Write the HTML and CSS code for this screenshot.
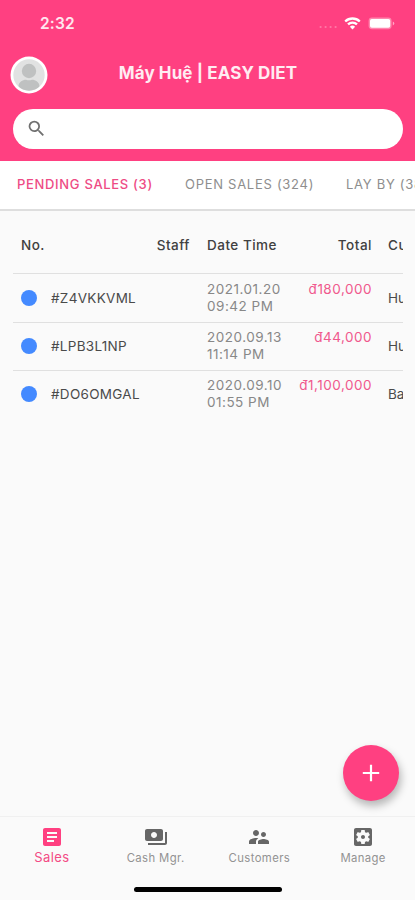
FILE: index.html
```html
<!DOCTYPE html>
<html lang="vi">
<head>
<meta charset="utf-8">
<meta name="viewport" content="width=device-width, initial-scale=1">
<title>Sales</title>
<link rel="stylesheet" href="styles.css">
</head>
<body>
<div class="app">
  <header class="header">
    <div class="status">
      <span class="clock">2:32</span>
      <div class="status-icons">
        <svg width="19" height="4" viewBox="0 0 19 4" fill="#ff78a5"><circle cx="1.6" cy="2" r="1.1"/><circle cx="6.6" cy="2" r="1.1"/><circle cx="11.6" cy="2" r="1.1"/><circle cx="16.6" cy="2" r="1.1"/></svg>
        <svg class="wifi" width="17" height="13" viewBox="0 0 17 13" fill="none" stroke="#fff" stroke-width="2.3"><path d="M1.2 4.5a10.4 10.4 0 0 1 14.6 0"/><path d="M4 7.4a6.4 6.4 0 0 1 9 0"/><path d="M8.5 12.4L5.9 9.8a3.7 3.7 0 0 1 5.2 0z" fill="#fff" stroke="none"/></svg>
        <svg class="battery" width="27" height="13" viewBox="0 0 27 13"><rect x=".6" y=".6" width="23" height="11.6" rx="3.4" fill="#ff86ae"/><rect x="2" y="2" width="20.2" height="8.8" rx="1.8" fill="#fff"/><path d="M24.8 4.6q1.5.6 1.5 1.9t-1.5 1.9z" fill="#ffa5c3"/></svg>
      </div>
    </div>
    <div class="titlebar">
      <svg class="avatar" width="38" height="38" viewBox="0 0 38 38"><defs><clipPath id="face"><circle cx="19" cy="19" r="15.7"/></clipPath></defs><circle cx="19" cy="19" r="18.5" fill="#fff"/><circle cx="19" cy="19" r="15.7" fill="#e1e2e2"/><g clip-path="url(#face)" fill="#bfc1c1"><circle cx="19" cy="15" r="7.2"/><path d="M8.5 38v-7.5c0-4.500 4-6.800 7.500-6.800q3 1.300 6 0c3.500 0 7.500 2.300 7.500 6.800V38z"/></g></svg>
      <h1 class="title">Máy Huệ | EASY DIET</h1>
    </div>
    <div class="search">
      <svg width="21" height="21" viewBox="0 0 24 24" fill="#707070"><path d="M15.500 14h-.79l-.28-.27A6.470 6.470 0 0 0 16 9.500 6.500 6.500 0 1 0 9.500 16c1.610 0 3.090-.59 4.230-1.570l.27.28v.79l5 4.990L20.490 19l-4.990-5zm-6 0C7.010 14 5 11.990 5 9.500S7.010 5 9.500 5 14 7.010 14 9.500 11.990 14 9.500 14z"/></svg>
    </div>
  </header>

  <nav class="tabs">
    <span class="tab tab-pending">PENDING SALES (3)</span>
    <span class="tab tab-open">OPEN SALES (324)</span>
    <span class="tab tab-layby">LAY BY (38)</span>
  </nav>

  <main class="content">
    <div class="table">
      <div class="row head">
        <span>No.</span><span class="right staff">Staff</span><span class="date">Date Time</span><span class="right">Total</span><span class="customer">Customer</span>
      </div>
      <div class="row first">
        <span class="number"><i class="dot"></i><span class="code">#Z4VKKVML</span></span><span></span><span class="date">2021.01.20<br>09:42 PM</span><span class="right total">đ180,000</span><span class="customer">Hu</span>
      </div>
      <div class="row">
        <span class="number"><i class="dot"></i><span class="code">#LPB3L1NP</span></span><span></span><span class="date">2020.09.13<br>11:14 PM</span><span class="right total">đ44,000</span><span class="customer">Hu</span>
      </div>
      <div class="row">
        <span class="number"><i class="dot"></i><span class="code">#DO6OMGAL</span></span><span></span><span class="date">2020.09.10<br>01:55 PM</span><span class="right total">đ1,100,000</span><span class="customer">Ban</span>
      </div>
    </div>
  </main>

  <button class="fab" aria-label="Add"><svg width="26" height="26" viewBox="0 0 26 26" fill="none" stroke="#fff" stroke-width="2.200"><path d="M13 4.800v16.400M4.800 13h16.400"/></svg></button>

  <footer class="footer">
    <nav class="bottom-nav">
      <div class="nav-item active">
        <svg width="24" height="24" viewBox="0 0 24 24"><path d="M19 3H5c-1.100 0-2 .9-2 2v14c0 1.100.9 2 2 2h14c1.100 0 2-.9 2-2V5c0-1.100-.9-2-2-2zm-5 14H7v-2h7v2zm3-4H7v-2h10v2zm0-4H7V7h10v2z"/></svg>
        <span>Sales</span>
      </div>
      <div class="nav-item">
        <svg width="24" height="24" viewBox="0 0 24 24"><path d="M19 14V6c0-1.100-.9-2-2-2H3c-1.100 0-2 .9-2 2v8c0 1.100.9 2 2 2h14c1.100 0 2-.9 2-2zm-9-1c-1.660 0-3-1.340-3-3s1.340-3 3-3 3 1.340 3 3-1.340 3-3 3zm13-6v11c0 1.100-.9 2-2 2H4v-2h17V7h2z"/></svg>
        <span>Cash Mgr.</span>
      </div>
      <div class="nav-item">
        <svg width="24" height="24" viewBox="0 0 24 24"><path d="M16.500 12c1.380 0 2.490-1.120 2.490-2.500S17.880 7 16.500 7C15.120 7 14 8.120 14 9.500s1.120 2.500 2.500 2.500zM9 11c1.660 0 2.990-1.340 2.990-3S10.660 5 9 5C7.340 5 6 6.340 6 8s1.340 3 3 3zm7.500 3c-1.830 0-5.500.92-5.500 2.750V19h11v-2.250c0-1.830-3.670-2.750-5.500-2.750zM9 13c-2.330 0-7 1.170-7 3.500V19h7v-2.250c0-.85.33-2.340 2.370-3.470C10.500 13.100 9.660 13 9 13z"/></svg>
        <span>Customers</span>
      </div>
      <div class="nav-item">
        <svg width="24" height="24" viewBox="0 0 24 24"><path d="M12 10c-1.100 0-2 .9-2 2s.9 2 2 2 2-.9 2-2-.9-2-2-2zm7-7H5c-1.110 0-2 .9-2 2v14c0 1.100.89 2 2 2h14c1.110 0 2-.9 2-2V5c0-1.100-.89-2-2-2zm-1.750 9c0 .23-.02.46-.05.68l1.480 1.160c.13.110.17.3.08.450l-1.400 2.420c-.09.150-.27.210-.43.150l-1.740-.7c-.36.280-.76.510-1.180.690l-.26 1.850c-.03.170-.18.300-.35.300h-2.800c-.17 0-.32-.13-.35-.29l-.26-1.850c-.43-.18-.82-.41-1.180-.69l-1.740.7c-.16.060-.34 0-.43-.15l-1.400-2.420c-.09-.15-.05-.34.08-.45l1.480-1.160c-.03-.23-.05-.46-.05-.69s.02-.46.050-.68l-1.480-1.160c-.13-.11-.17-.3-.08-.45l1.400-2.420c.09-.15.27-.21.430-.15l1.740.7c.36-.28.760-.51 1.180-.69l.26-1.850c.03-.17.180-.3.350-.3h2.800c.17 0 .32.130.35.290l.26 1.850c.43.180.82.410 1.180.690l1.740-.7c.16-.06.34 0 .43.150l1.400 2.420c.09.150.05.340-.08.450l-1.480 1.160c.03.230.05.460.05.690z"/></svg>
        <span>Manage</span>
      </div>
    </nav>
    <div class="home-bar"></div>
  </footer>
</div>
</body>
</html>
```

FILE: styles.css
```css
* { box-sizing: border-box; }
body { margin: 0; font-family: Inter, Roboto, sans-serif; background: #fafafa; }
.app { position: relative; width: 415px; height: 900px; display: flex; flex-direction: column; overflow: hidden; background: #fafafa; }
.header { height: 161px; flex: none; background: #ff4081; color: #fff; }
.status { height: 46px; padding: 0 20px 0 40px; display: flex; align-items: center; justify-content: space-between; }
.clock { font-size: 15.5px; font-weight: 600; letter-spacing: 0.2px; color: #ffe6ee; }
.status-icons { display: flex; align-items: center; }
.status-icons svg:first-child { margin-top: 8px; }
.wifi { margin-left: 6px; }
.battery { margin-left: 7px; }
.titlebar { height: 54px; padding-left: 9.5px; display: flex; align-items: center; margin-top: 1.5px; }
.titlebar .avatar { flex: none; }
.title { margin: -3px 46.500px 0 0; flex: 1; text-align: center; font-size: 17px; font-weight: 700; letter-spacing: 0.1px; color: #ffecf2; }
.search { height: 40.500px; margin: 7px 12px 0 12.500px; padding-left: 13.500px; border-radius: 21px; background: #fff; display: flex; align-items: center; }
.tabs { height: 50px; flex: none; display: flex; align-items: center; padding: 0 0 2px 17px; background: #fff; border-bottom: 2px solid #dedede; overflow: hidden; }
.tab { flex: none; font-size: 13px; letter-spacing: 0.72px; color: #8e8e8e; white-space: nowrap; }
.tab-pending { width: 168px; color: #ee4b85; font-weight: 500; letter-spacing: 0.68px; }
.tab-open { width: 161px; }
.content { flex: 1; padding: 0 12px 0 13px; }
.table { overflow: hidden; }
.row { display: grid; grid-template-columns: 119px 50px 91px 91px 80px; padding: 0 0 2px 8px; height: 48px; align-items: center; border-top: 1px solid #e0e0e0; font-size: 13.500px; color: #4a4a4a; white-space: nowrap; }
.row.first { height: 49px; padding-bottom: 0; }
.row.head { height: 62px; padding-top: 6px; padding-bottom: 0; border-top: 0; font-size: 13.500px; font-weight: 500; letter-spacing: 0.5px; color: #404040; }
.right { text-align: right; }
.date { padding-left: 17px; line-height: 17px; letter-spacing: 0.5px; color: #888; }
.head .date { color: #404040; }
.total { align-self: start; padding-top: 6px; letter-spacing: 0.5px; color: #f0588d; }
.first .total { padding-top: 7px; }
.customer { padding-left: 16px; }
.number { display: flex; align-items: center; gap: 14px; }
.dot { width: 16px; height: 16px; flex: none; border-radius: 50%; background: #448aff; }
.code { letter-spacing: 0.3px; }
.fab { position: absolute; left: 343px; top: 744.500px; width: 56px; height: 56px; padding: 0; border: 0; border-radius: 50%; background: #ff4081; box-shadow: 2px 5px 8px rgba(0,0,0,.28); display: flex; align-items: center; justify-content: center; }
.footer { height: 84px; flex: none; border-top: 1px solid #f0f0f0; }
.bottom-nav { height: 70px; display: grid; grid-template-columns: repeat(4, 1fr); }
.nav-item { display: flex; flex-direction: column; align-items: center; padding-top: 8px; font-size: 11.300px; line-height: 16px; letter-spacing: 0.4px; color: #929292; }
.nav-item svg { fill: #666; }
.nav-item span { margin-top: 1px; }
.nav-item.active { font-size: 13px; color: #f34b85; }
.nav-item.active span { margin-top: 0; }
.nav-item.active svg { fill: #ff4081; }
.home-bar { width: 148px; height: 5px; margin: 0 auto; border-radius: 3px; background: #000; }
```
